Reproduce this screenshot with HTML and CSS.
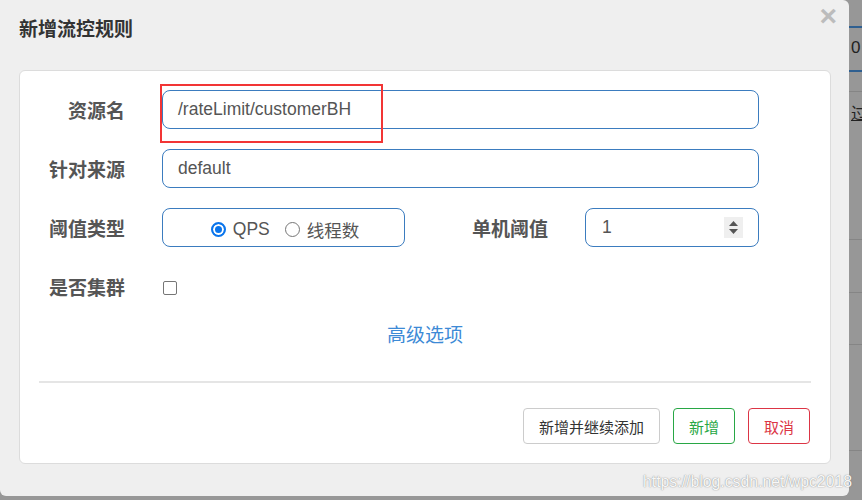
FILE: index.html
```html
<!DOCTYPE html>
<html lang="zh-CN">
<head>
<meta charset="utf-8">
<title>新增流控规则</title>
<link rel="stylesheet" href="styles.css">
</head>
<body>
<div class="screen">
  <div class="dialog">
    <div class="header">
      <h4 class="title">新增流控规则</h4>
      <span class="close">×</span>
    </div>
    <div class="card">
      <div class="row">
        <label class="lbl">资源名</label>
        <div class="field w-full">/rateLimit/customerBH</div>
      </div>
      <div class="row">
        <label class="lbl">针对来源</label>
        <div class="field w-full">default</div>
      </div>
      <div class="row">
        <label class="lbl">阈值类型</label>
        <div class="field radios">
          <span class="radio on"></span><span class="rtext">QPS</span>
          <span class="radio"></span><span class="rtext">线程数</span>
        </div>
        <label class="lbl lbl2">单机阈值</label>
        <div class="field num">
          <span>1</span>
          <span class="spin">
            <svg width="19" height="21" viewBox="0 0 19 21"><path d="M5 9 L9.5 4 L14 9 Z" fill="#555"/><path d="M5 12 L9.5 17 L14 12 Z" fill="#555"/></svg>
          </span>
        </div>
      </div>
      <div class="row">
        <label class="lbl">是否集群</label>
        <span class="checkbox"></span>
      </div>
      <div class="more"><a class="link">高级选项</a></div>
      <div class="divider"></div>
      <div class="actions">
        <button class="btn btn-default">新增并继续添加</button>
        <button class="btn btn-ok">新增</button>
        <button class="btn btn-cancel">取消</button>
      </div>
    </div>
  </div>
  <div class="backdrop">
    <div class="bd bd1"></div>
    <div class="bd bd2"><span class="bdtext">0</span></div>
    <div class="bd bd3"></div>
    <div class="bd bd4"><span class="bdtext ul">过</span></div>
    <div class="bd bd5"></div>
    <div class="bd bd6"></div>
    <div class="bd bd7"></div>
    <div class="bd bd8"></div>
  </div>
  <div class="annot"></div>
  <div class="watermark">https://blog.csdn.net/wpc2018</div>
</div>
</body>
</html>
```

FILE: styles.css
```css
* { box-sizing: border-box; }

body {
  margin: 0;
  background: #979797;
  font-family: "Liberation Sans", "Noto Sans CJK SC", sans-serif;
  width: 862px;
  height: 500px;
  overflow: hidden;
}

.screen {
  position: relative;
  display: flex;
  height: 500px;
}

.dialog {
  flex: none;
  width: 849px;
  height: 496px;
  background: #efefef;
  border-radius: 0 6px 6px 6px;
}

.header {
  height: 70px;
  display: flex;
  justify-content: space-between;
  align-items: flex-start;
  padding-left: 19px;
}

.title {
  margin: 0;
  padding-top: 17px;
  font-size: 19px;
  line-height: 26px;
  font-weight: bold;
  color: #333;
}

.close {
  margin-top: 1px;
  margin-right: 12px;
  font-size: 30px;
  line-height: 30px;
  font-weight: bold;
  color: #bcbcbc;
}

.card {
  margin-left: 19px;
  width: 812px;
  height: 394px;
  background: #fff;
  border: 1px solid #dcdcdc;
  border-radius: 6px;
  padding-top: 19px;
}

.row {
  display: flex;
  align-items: center;
  height: 39px;
  margin-bottom: 20px;
}

.lbl {
  width: 105px;
  margin-right: 37px;
  text-align: right;
  font-size: 19px;
  line-height: 20px;
  font-weight: bold;
  color: #555;
  padding-top: 4px;
  flex: none;
}

.lbl2 { width: 143px; }

.field {
  flex: none;
  height: 39px;
  border: 1px solid #3b7cbf;
  border-radius: 8px;
  padding: 0 15px 0 15px;
  display: flex;
  align-items: center;
  font-size: 17.5px;
  color: #555;
}

.w-full { width: 597px; }

.radios {
  width: 243px;
  justify-content: center;
  padding-top: 4px;
  padding-left: 18px;
}

.radio {
  width: 15px;
  height: 15px;
  border-radius: 50%;
  border: 1px solid #767676;
  background: #fff;
  margin-right: 7px;
}

.radio.on {
  border: 2px solid #0a75ec;
  background: #0a75ec;
  box-shadow: inset 0 0 0 2px #fff;
}

.rtext { margin-right: 15px; }
.rtext:last-child { margin-right: 0; }

.num {
  width: 174px;
  justify-content: space-between;
  padding-left: 16px;
}

.spin {
  display: flex;
  width: 19px;
  height: 21px;
  background: #efefef;
}

.checkbox {
  width: 14px;
  height: 14px;
  border: 1px solid #767676;
  border-radius: 2px;
  margin-top: 2px;
  margin-left: 1px;
}

.more {
  height: 20px;
  line-height: 20px;
  text-align: center;
}

.link {
  font-size: 19px;
  color: #3d8ad6;
}

.divider {
  height: 2px;
  background: #e5e5e5;
  margin: 35px 19px 0 19px;
}

.actions {
  display: flex;
  justify-content: flex-end;
  gap: 13px;
  padding-right: 20px;
  margin-top: 25px;
}

.btn {
  height: 36px;
  padding: 0 15px;
  border-radius: 4px;
  background: #fff;
  font-family: "Liberation Sans", "Noto Sans CJK SC", sans-serif;
  font-size: 15px;
  border: 1px solid #ccc;
  color: #333;
}

.btn-default { width: 137px; }
.btn-ok { width: 62px; border-color: #28a745; color: #28a745; }
.btn-cancel { width: 62px; border-color: #dc3545; color: #dc3545; }

.backdrop {
  flex: 1;
  display: flex;
  flex-direction: column;
}

.bd { border-bottom: 1px solid #858585; flex: none; }
.bd1 { height: 28px; border-bottom: 2px solid #2f5f90; }
.bd2 { height: 44px; border-bottom: 2px solid #2f5f90; padding-top: 10px; }
.bd3 { height: 20px; }
.bd4 { height: 148px; padding-top: 12px; }
.bd5 { height: 53px; }
.bd6 { height: 52px; }
.bd7 { height: 106px; }
.bd8 { height: 40px; border-bottom: none; }

.bdtext {
  display: block;
  font-size: 17px;
  line-height: 20px;
  color: #222;
  padding-left: 2px;
}

.ul { text-decoration: underline; font-size: 16px; }

.annot {
  position: absolute;
  left: 160px;
  top: 84px;
  width: 223px;
  height: 59px;
  border: 2px solid #f23535;
}

.watermark {
  position: absolute;
  left: 643px;
  top: 472px;
  font-size: 15.8px;
  line-height: 20px;
  color: rgba(255, 255, 255, 0.95);
  text-shadow: 0 0 1px rgba(110, 110, 110, 0.8), 0 0 2px rgba(150, 150, 150, 0.4);
  white-space: nowrap;
}
```
